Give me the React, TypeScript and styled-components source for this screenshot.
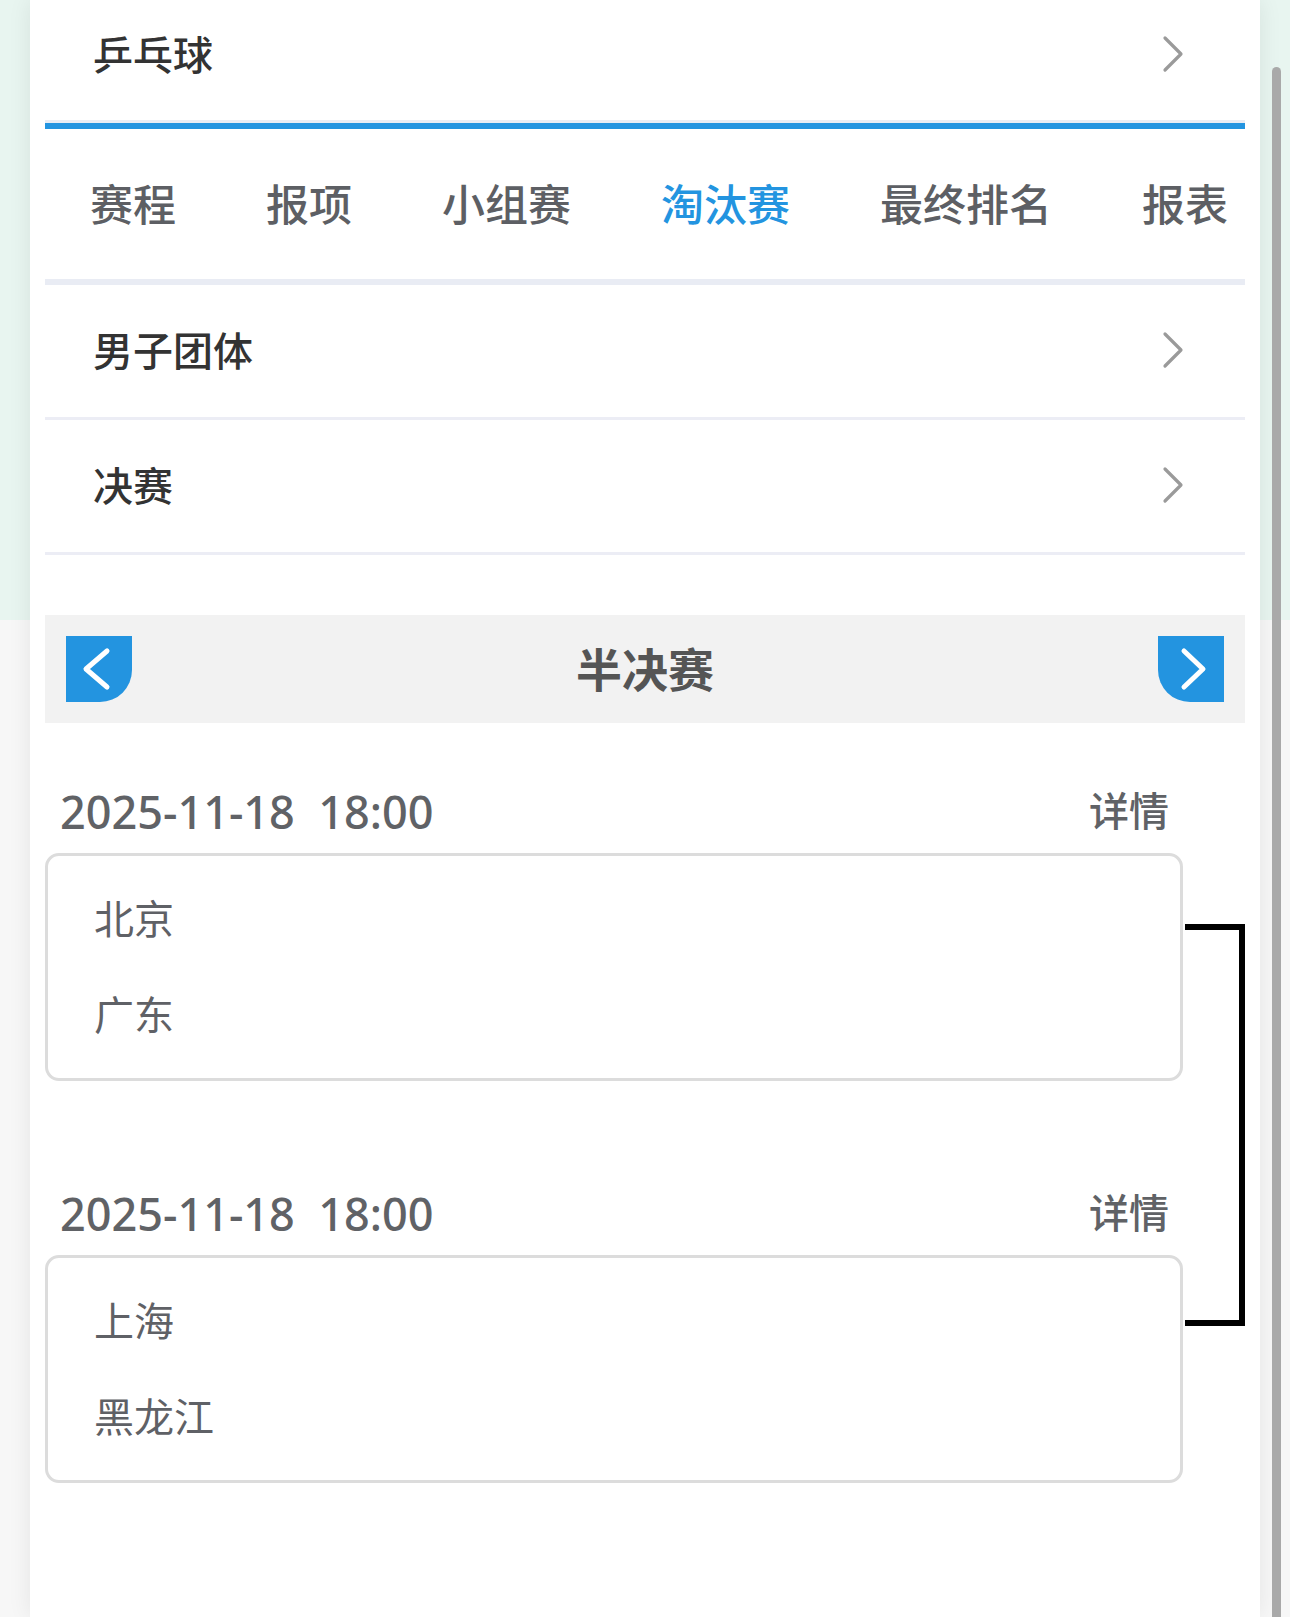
import React from "react";
import styled, { createGlobalStyle } from "styled-components";

const GlobalStyle = createGlobalStyle`
  html, body {
    margin: 0;
    padding: 0;
  }
  body {
    background: linear-gradient(to bottom, #e8f5f0 0, #e8f5f0 620px, #f7f7f7 620px, #f7f7f7 100%);
    font-family: "Noto Sans", "Noto Sans CJK SC", sans-serif;
    -webkit-font-smoothing: antialiased;
  }
  * { box-sizing: border-box; }
`;

const Page = styled.div`
  width: 1290px;
  min-height: 1617px;
  padding: 0 30px;
  display: flex;
`;

const Panel = styled.main`
  width: 1230px;
  min-height: 1617px;
  background: #ffffff;
  padding: 0 15px;
  box-shadow: 0 0 22px rgba(0, 0, 0, 0.08);
  display: flex;
  flex-direction: column;
`;

const NavRow = styled.div<{ $h: number; $lift?: number; $border: string }>`
  height: ${(p) => p.$h}px;
  padding: 0 60px ${(p) => p.$lift ?? 0}px 48px;
  display: flex;
  align-items: center;
  justify-content: space-between;
  border-bottom: ${(p) => p.$border};
`;

const RowLabel = styled.span`
  font-size: 40px;
  font-weight: 500;
  color: #333333;
  line-height: 1;
`;

const TabBar = styled.nav`
  height: 162px;
  border-top: 6px solid #2394e0;
  border-bottom: 6px solid #e9ecf4;
  display: flex;
  align-items: center;
  overflow: hidden;
  white-space: nowrap;
`;

const Tab = styled.span<{ $active?: boolean }>`
  flex: none;
  padding: 0 45px;
  font-size: 43px;
  font-weight: 500;
  line-height: 1;
  color: ${(p) => (p.$active ? "#2394e0" : "#5d5f64")};
`;

const RoundHeader = styled.div`
  margin-top: 60px;
  height: 108px;
  background: #f2f2f2;
  padding: 0 21px;
  display: flex;
  align-items: center;
  justify-content: space-between;
`;

const RoundTitle = styled.span`
  font-size: 46px;
  font-weight: 700;
  color: #555555;
  line-height: 1;
`;

const NavButton = styled.button<{ $side: "left" | "right" }>`
  width: 66px;
  height: 66px;
  border: none;
  padding: 0;
  background: #2394e0;
  border-radius: ${(p) => (p.$side === "left" ? "0 0 32px 0" : "0 0 0 32px")};
  display: flex;
  align-items: center;
  justify-content: center;
  cursor: pointer;
`;

const Bracket = styled.section`
  margin-top: 46px;
  display: flex;
`;

const MatchList = styled.div`
  width: 1138px;
  display: flex;
  flex-direction: column;
`;

const Match = styled.div<{ $gap: number }>`
  margin-top: ${(p) => p.$gap}px;
  display: flex;
  flex-direction: column;
`;

const DateRow = styled.div`
  height: 84px;
  padding: 0 14px 0 15px;
  display: flex;
  align-items: center;
  justify-content: space-between;
  color: #606266;
`;

const DateText = styled.span`
  font-size: 45px;
  font-weight: 500;
  line-height: 1;
  white-space: pre;
`;

const DetailLink = styled.span`
  font-size: 40px;
  font-weight: 500;
  line-height: 1;
`;

const MatchCard = styled.div`
  height: 228px;
  border: 3px solid #dcdcdc;
  border-radius: 14px;
  padding: 15px 0 14px 46px;
  display: flex;
  flex-direction: column;
`;

const Team = styled.div`
  height: 96px;
  display: flex;
  align-items: center;
  font-size: 40px;
  line-height: 1;
  color: #5f6166;
`;

const ConnectorColumn = styled.div`
  flex: 1;
  padding: 155px 0 0 2px;
`;

const Connector = styled.div`
  width: 60px;
  height: 402px;
  border: 6px solid #000000;
  border-left: none;
`;

const ScrollThumb = styled.div`
  position: fixed;
  left: 1272px;
  top: 67px;
  bottom: 0;
  width: 9px;
  background: #a9a9a9;
  border-radius: 5px 5px 0 0;
`;

const Chevron = () => (
  <svg width="24" height="40" viewBox="0 0 24 40" aria-hidden>
    <polyline
      points="4,3 20,19 4,35"
      fill="none"
      stroke="#9a9a9a"
      strokeWidth="3.2"
      strokeLinecap="round"
      strokeLinejoin="round"
    />
  </svg>
);

const ArrowIcon = ({ dir }: { dir: "left" | "right" }) => (
  <svg width="66" height="66" viewBox="0 0 66 66" aria-hidden>
    <polyline
      points={dir === "left" ? "41,15 20,33 41,51" : "26,15 45,33 26,51"}
      fill="none"
      stroke="#ffffff"
      strokeWidth="5"
      strokeLinecap="round"
      strokeLinejoin="round"
    />
  </svg>
);

const tabs = ["赛程", "报项", "小组赛", "淘汰赛", "最终排名", "报表"];

const matches = [
  { time: "2025-11-18  18:00", teams: ["北京", "广东"], gap: 0 },
  { time: "2025-11-18  18:00", teams: ["上海", "黑龙江"], gap: 90 },
];

export default function App() {
  return (
    <>
      <GlobalStyle />
      <Page>
        <Panel>
          <NavRow $h={123} $lift={10} $border="3px solid #e8ecf4">
            <RowLabel>乒乓球</RowLabel>
            <Chevron />
          </NavRow>
          <TabBar>
            {tabs.map((t) => (
              <Tab key={t} $active={t === "淘汰赛"}>
                {t}
              </Tab>
            ))}
          </TabBar>
          <NavRow $h={135} $border="3px solid #ecedf5">
            <RowLabel>男子团体</RowLabel>
            <Chevron />
          </NavRow>
          <NavRow $h={135} $border="3px solid #ecedf5">
            <RowLabel>决赛</RowLabel>
            <Chevron />
          </NavRow>
          <RoundHeader>
            <NavButton $side="left" aria-label="上一轮">
              <ArrowIcon dir="left" />
            </NavButton>
            <RoundTitle>半决赛</RoundTitle>
            <NavButton $side="right" aria-label="下一轮">
              <ArrowIcon dir="right" />
            </NavButton>
          </RoundHeader>
          <Bracket>
            <MatchList>
              {matches.map((m, i) => (
                <Match key={i} $gap={m.gap}>
                  <DateRow>
                    <DateText>{m.time}</DateText>
                    <DetailLink>详情</DetailLink>
                  </DateRow>
                  <MatchCard>
                    {m.teams.map((team) => (
                      <Team key={team}>{team}</Team>
                    ))}
                  </MatchCard>
                </Match>
              ))}
            </MatchList>
            <ConnectorColumn>
              <Connector />
            </ConnectorColumn>
          </Bracket>
        </Panel>
      </Page>
      <ScrollThumb />
    </>
  );
}
